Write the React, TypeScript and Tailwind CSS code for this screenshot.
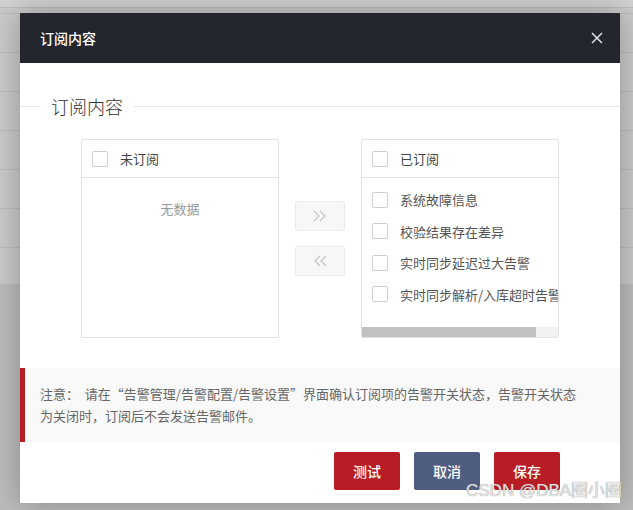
const font = { fontFamily: '"Microsoft YaHei", "Noto Sans CJK SC", "Noto Sans", sans-serif' };

const subscribed = ['系统故障信息', '校验结果存在差异', '实时同步延迟过大告警', '实时同步解析/入库超时告警'];

function Checkbox() {
  return <span className="inline-block w-[16px] h-[16px] shrink-0 border border-[#d0d0d0] rounded-[2px] bg-white" />;
}

function Chevrons({ left }: { left?: boolean }) {
  return (
    <svg width="14" height="12" viewBox="0 0 14 12" fill="none" stroke="#c4c4c4" strokeWidth="1.2" className={left ? 'rotate-180' : ''}>
      <polyline points="1,1 6,6 1,11" />
      <polyline points="7,1 12,6 7,11" />
    </svg>
  );
}

function Panel({ title, children }: { title: string; children: React.ReactNode }) {
  return (
    <div className="w-[198px] h-[199px] border border-[#e2e2e2] rounded-[2px] flex flex-col overflow-hidden bg-white">
      <div className="h-[38px] shrink-0 border-b border-[#e2e2e2] flex items-center pl-[10px] gap-[12px] text-[13px] text-[#444]">
        <Checkbox />
        <span>{title}</span>
      </div>
      {children}
    </div>
  );
}

export default function App() {
  return (
    <div className="relative w-[633px] h-[510px] overflow-hidden bg-[#e6e6e6]" style={font}>
      {/* page behind the dialog */}
      <div className="flex flex-col">
        <div className="h-[8px] bg-white border-b border-[#e4e4e4]" />
        <div className="h-[6px] bg-[#f6f6f6] border-b border-[#e4e4e4]" />
        {[0, 1, 2, 3, 4, 5].map((i) => (
          <div key={i} className="h-[39px] bg-[#f6f6f6] border-b border-[#e4e4e4]" />
        ))}
        <div className="h-[36px] bg-[#f6f6f6]" />
      </div>
      <div className="absolute inset-0 bg-black/[0.18]" />

      {/* dialog */}
      <div className="absolute left-[20px] top-[13px] w-[600px] bg-white shadow-[0_0_28px_rgba(0,0,0,0.28)]">
        <div className="h-[50px] bg-[#23262f] flex items-center justify-between pl-[20px] pr-[17px]">
          <span className="text-[14px] font-medium text-white">订阅内容</span>
          <svg width="12" height="12" viewBox="0 0 12 12" stroke="#e6e6e6" strokeWidth="1.5">
            <line x1="1" y1="1" x2="11" y2="11" />
            <line x1="11" y1="1" x2="1" y2="11" />
          </svg>
        </div>

        <div className="pt-[31px]">
          <div className="flex items-center">
            <div className="w-[21px] h-px bg-[#e8e8e8]" />
            <span className="px-[10px] text-[18px] leading-[24px] font-light text-[#333]">订阅内容</span>
            <div className="flex-1 h-px bg-[#e8e8e8]" />
          </div>

          <div className="flex justify-center items-center gap-[16px] mt-[21px]">
            <Panel title="未订阅">
              <div className="pt-[21px] text-center text-[13px] text-[#999]">无数据</div>
            </Panel>

            <div className="flex flex-col gap-[15px]">
              <div className="w-[50px] h-[30px] border border-[#ebebeb] bg-[#f7f7f7] rounded-[2px] flex items-center justify-center">
                <Chevrons />
              </div>
              <div className="w-[50px] h-[30px] border border-[#ebebeb] bg-[#f7f7f7] rounded-[2px] flex items-center justify-center">
                <Chevrons left />
              </div>
            </div>

            <Panel title="已订阅">
              <div className="flex-1 pt-[6px] overflow-hidden">
                {subscribed.map((s) => (
                  <div key={s} className="h-[31.5px] flex items-center pl-[10px] gap-[12px] text-[13px] text-[#555] whitespace-nowrap">
                    <Checkbox />
                    <span>{s}</span>
                  </div>
                ))}
              </div>
              <div className="h-[10px] shrink-0 bg-[#f1f1f1] flex">
                <div className="w-[174px] bg-[#c1c1c1]" />
              </div>
            </Panel>
          </div>

          <div className="mt-[30px] bg-[#f9f9f9] border-l-[5px] border-[#b71c23] pl-[15px] pr-[34px] py-[15px] text-[13px] leading-[22px] text-[#666]">
            注意：&nbsp;&nbsp;请在“告警管理/告警配置/告警设置”界面确认订阅项的告警开关状态，告警开关状态为关闭时，订阅后不会发送告警邮件。
          </div>

          <div className="flex justify-end gap-[14px] pr-[60px] pt-[10px] pb-[13px]">
            <button className="w-[66px] h-[38px] rounded-[2px] bg-[#b81c24] text-white text-[14px] font-medium">测试</button>
            <button className="w-[66px] h-[38px] rounded-[2px] bg-[#4f5d80] text-white text-[14px] font-medium">取消</button>
            <button className="w-[66px] h-[38px] rounded-[2px] bg-[#b81c24] text-white text-[14px] font-medium">保存</button>
          </div>
        </div>
      </div>

      <div
        className="absolute left-[466px] top-[480px] text-[17px] leading-[22px] text-[#e2e2e2] [text-shadow:0_0_1px_#888]"
        style={{ fontFamily: '"Liberation Sans", "Noto Sans CJK SC", sans-serif' }}
      >
        CSDN @DBA圈小圈
      </div>
    </div>
  );
}
